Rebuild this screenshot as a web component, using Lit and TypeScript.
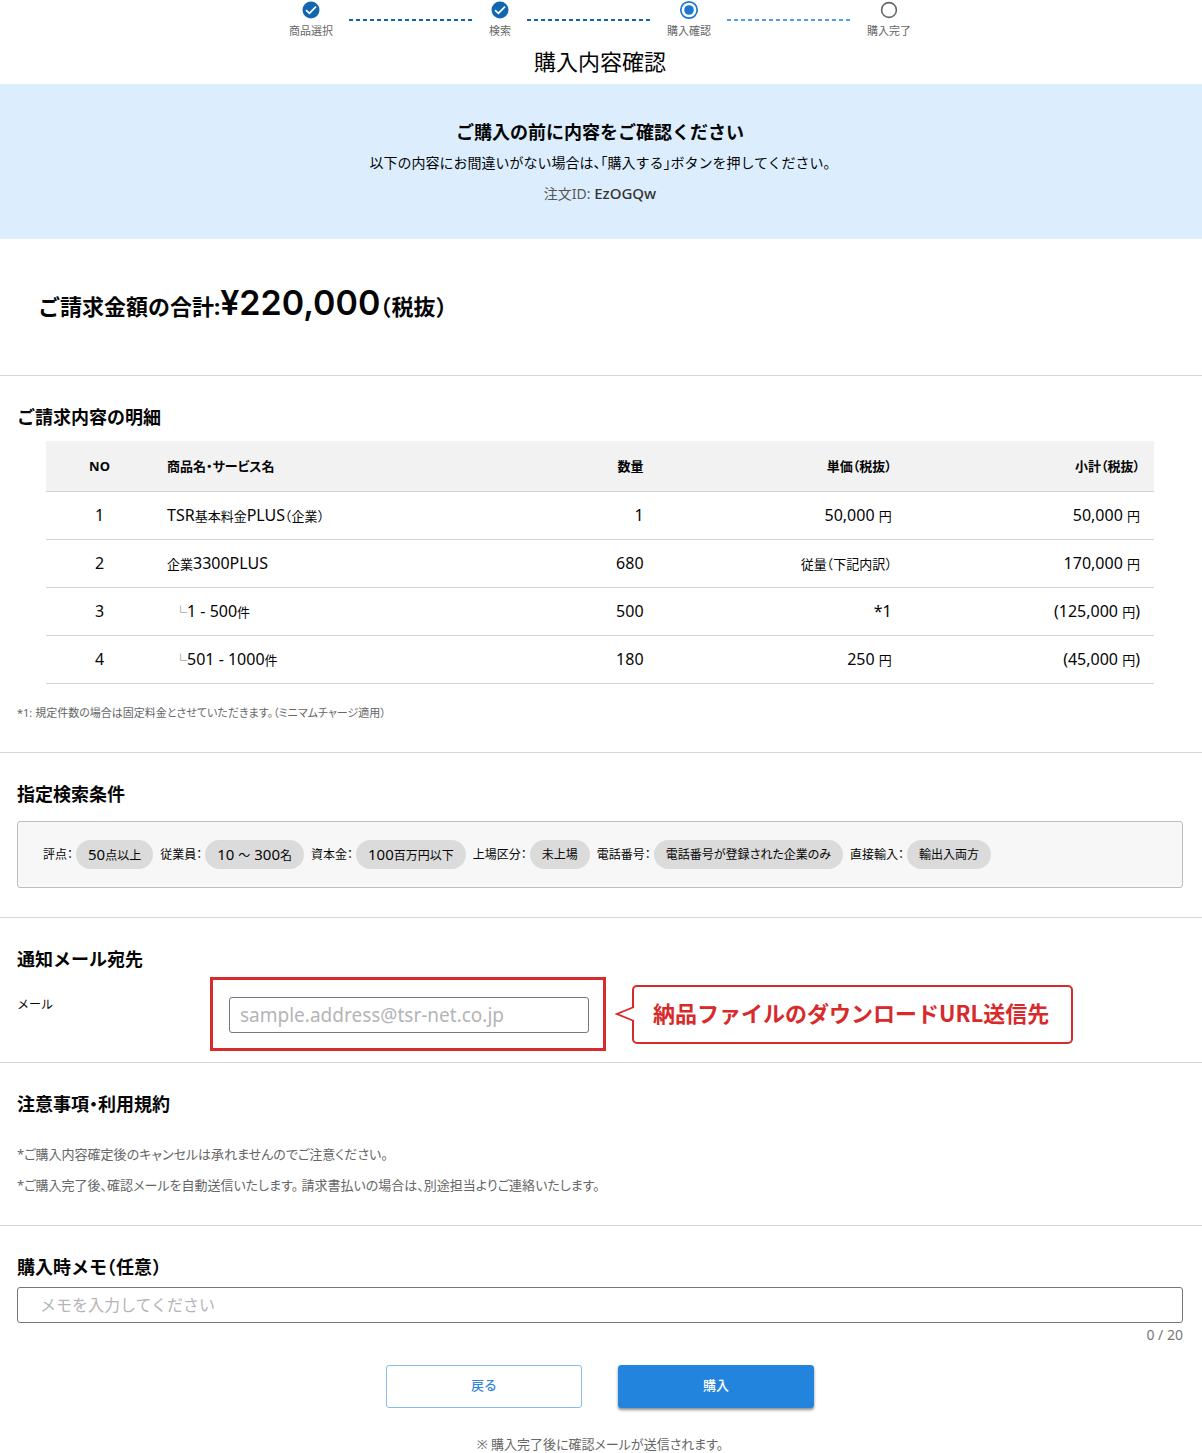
import { LitElement, html, css, svg } from "lit";
import { customElement, state } from "lit/decorators.js";

type StepState = "done" | "current" | "todo";

interface Step {
  label: string;
  state: StepState;
}

interface LineItem {
  no: string;
  name: string;
  child?: boolean;
  quantity: string;
  price: string;
  subtotal: string;
}

const STEPS: Step[] = [
  { label: "商品選択", state: "done" },
  { label: "検索", state: "done" },
  { label: "購入確認", state: "current" },
  { label: "購入完了", state: "todo" },
];

const ITEMS: LineItem[] = [
  { no: "1", name: "TSR基本料金PLUS（企業）", quantity: "1", price: "50,000 円", subtotal: "50,000 円" },
  { no: "2", name: "企業3300PLUS", quantity: "680", price: "従量（下記内訳）", subtotal: "170,000 円" },
  { no: "3", name: "1 - 500件", child: true, quantity: "500", price: "*1", subtotal: "(125,000 円)" },
  { no: "4", name: "501 - 1000件", child: true, quantity: "180", price: "250 円", subtotal: "(45,000 円)" },
];

const CONDITIONS: [string, string][] = [
  ["評点", "50点以上"],
  ["従業員", "10 ～ 300名"],
  ["資本金", "100百万円以下"],
  ["上場区分", "未上場"],
  ["電話番号", "電話番号が登録された企業のみ"],
  ["直接輸入", "輸出入両方"],
];

/** Wraps each run of Latin letters and digits so it can be sized apart from the Japanese text. */
const mixed = (text: string) =>
  text
    .split(/([\x20-\x7e]+)/)
    .filter((part) => part !== "")
    .map((part) => (/^[\x20-\x7e]/.test(part) ? html`<span class="latin">${part}</span>` : part));

@customElement("step-icon")
export class StepIcon extends LitElement {
  static properties = { state: { type: String } };
  declare state: StepState;

  static styles = css`
    :host {
      display: block;
      height: 20px;
    }
    svg {
      display: block;
    }
  `;

  render() {
    const shape =
      this.state === "done"
        ? svg`<circle cx="10" cy="10" r="8.5" fill="#1266b0"/><path d="M5 10.2 8.4 13.4 15 6.6" fill="none" stroke="#fff" stroke-width="1.7"/>`
        : this.state === "current"
          ? svg`<circle cx="10" cy="10" r="8.2" fill="#fff" stroke="#1c78d0" stroke-width="1.7"/><circle cx="10" cy="10" r="4.8" fill="#1c78d0"/>`
          : svg`<circle cx="10" cy="10" r="7.4" fill="#fff" stroke="#666" stroke-width="1.6"/>`;
    return html`<svg width="20" height="20" viewBox="0 0 20 20" aria-hidden="true">${shape}</svg>`;
  }
}

@customElement("app-root")
export class AppRoot extends LitElement {
  @state() private memo = "";

  static styles = css`
    :host {
      display: block;
      background: #fff;
      color: #050505;
      font-family: "Noto Sans", "Noto Sans CJK JP", sans-serif;
      font-size: 13px;
      font-feature-settings: "halt";
    }
    * {
      box-sizing: border-box;
    }
    h1,
    h2,
    p,
    ol {
      margin: 0;
      padding: 0;
    }
    input,
    button {
      font: inherit;
      font-feature-settings: inherit;
    }
    .steps {
      display: flex;
      justify-content: center;
      gap: 15px;
      height: 40px;
      padding-right: 2px;
      list-style: none;
    }
    .step {
      display: flex;
      flex-direction: column;
      align-items: center;
      color: #666;
      font-size: 11px;
      line-height: 22px;
    }
    .connector {
      width: 126px;
      height: 2px;
      margin: 19px -1px 0 1px;
      background: repeating-linear-gradient(90deg, #1266b0 0 4px, transparent 4px 7px);
    }
    .connector.pending {
      background: repeating-linear-gradient(90deg, #559bea 0 4px, transparent 4px 7px);
    }
    .title {
      height: 44px;
      padding-right: 2px;
      text-align: center;
      font-size: 22px;
      font-weight: 400;
      line-height: 42px;
    }
    .banner {
      padding: 32px 2px 30px 0;
      background: #dceefe;
      text-align: center;
      line-height: 30px;
    }
    .banner h2 {
      font-size: 18px;
      font-weight: 700;
      line-height: 32px;
    }
    .banner p {
      font-size: 14px;
    }
    .banner .order {
      color: #555;
    }
    .order strong {
      color: #333;
      font-size: 15px;
      font-weight: 500;
    }
    .total {
      height: 136px;
      padding: 38px;
      font-size: 22px;
      font-weight: 700;
      line-height: 52px;
    }
    .total strong {
      font-family: Inter, "Noto Sans", sans-serif;
      font-size: 34px;
      font-weight: 600;
    }
    .section {
      border-top: 1px solid #d6d6d6;
      padding: 28px 19px 0 17px;
    }
    .heading {
      font-size: 18px;
      font-weight: 700;
      line-height: 26px;
    }
    .bill {
      padding-bottom: 27px;
    }
    .table-wrap {
      padding: 11px 29px 0;
    }
    table {
      width: 100%;
      table-layout: fixed;
      border-collapse: separate;
      border-spacing: 0;
    }
    th,
    td {
      height: 48px;
      padding: 0 14px;
      border-bottom: 1px solid #d2d2d2;
      text-align: right;
      font-weight: 400;
      line-height: 22px;
    }
    th {
      height: 51px;
      background: #f2f2f3;
      font-weight: 700;
      font-feature-settings: "palt";
    }
    .no {
      width: 107px;
      text-align: center;
    }
    .name {
      width: 32%;
      text-align: left;
    }
    .quantity {
      width: 150px;
    }
    td .latin {
      font-size: 16px;
    }
    .branch {
      padding-left: 7px;
      color: #777;
    }
    .footnote {
      margin-top: 17px;
      color: #666;
      font-size: 11px;
      font-feature-settings: "palt";
      line-height: 24px;
    }
    .search {
      padding-bottom: 29px;
    }
    .conditions {
      display: flex;
      flex-wrap: wrap;
      align-items: center;
      gap: 8px 7px;
      margin-top: 14px;
      padding: 18px 25px;
      border: 1px solid #bdbdc0;
      border-radius: 3px;
      background: #f7f7f7;
      font-size: 12px;
      line-height: 29px;
    }
    .condition {
      display: flex;
      gap: 3px;
      margin: 0;
    }
    .chip {
      height: 29px;
      padding: 0 12px;
      border-radius: 15px;
      background: #dbdbdb;
      font-feature-settings: "palt";
    }
    .chip .latin {
      font-size: 15px;
    }
    .mail {
      padding-bottom: 11px;
    }
    .mail-row {
      display: flex;
      align-items: flex-start;
      padding-top: 5px;
    }
    .mail-label {
      width: 193px;
      padding-top: 17px;
      font-size: 12px;
      line-height: 22px;
    }
    .highlight {
      width: 396px;
      padding: 17px 14px 15px 16px;
      border: 3px solid #d82a2a;
    }
    .field {
      display: block;
      width: 100%;
      height: 36px;
      padding: 0 10px;
      border: 1px solid #77777a;
      border-radius: 3px;
      background: #fff;
      color: #111;
      font-size: 19px;
    }
    .field::placeholder {
      color: #b4b4b7;
      opacity: 1;
    }
    .callout {
      position: relative;
      margin: 8px 0 0 26px;
      padding: 0 22px 4px 19px;
      border: 2px solid #d82a2a;
      border-radius: 5px;
      color: #d82a2a;
      font-family: "Noto Sans CJK JP", sans-serif;
      font-size: 22px;
      font-weight: 700;
      line-height: 51px;
      font-feature-settings: normal;
    }
    .pointer {
      position: absolute;
      top: 18px;
      left: -19px;
    }
    .terms {
      padding-bottom: 24px;
    }
    .terms ul {
      margin: 22px 0 0;
      padding: 0;
      list-style: none;
      color: #666;
      font-feature-settings: "palt";
      line-height: 31px;
    }
    .memo .field {
      margin-top: 7px;
      padding: 0 22px;
      font-size: 16px;
    }
    .counter {
      color: #777;
      font-size: 14px;
      line-height: 24px;
      text-align: right;
    }
    .actions {
      display: flex;
      justify-content: center;
      gap: 36px;
      margin-top: 18px;
      padding-right: 2px;
    }
    .button {
      width: 196px;
      height: 43px;
      padding: 0 0 5px;
      border: 1px solid #85bdf0;
      border-radius: 3px;
      background: #fff;
      color: #3385da;
      font-weight: 500;
    }
    .button.primary {
      border-color: #2384dd;
      background: #2384dd;
      color: #fff;
      box-shadow: 0 2px 3px rgba(0, 0, 0, 0.45);
    }
    .memo .actions,
    .memo .closing {
      padding-right: 0;
    }
    .closing {
      margin-top: 28px;
      color: #666;
      font-feature-settings: "palt";
      line-height: 17px;
      text-align: center;
    }
  `;

  render() {
    return html`
      <main>
        <ol class="steps">
          ${STEPS.map(
            (step, i) => html`
              ${i > 0
                ? html`<li class="connector ${STEPS[i - 1].state === "done" ? "" : "pending"}" role="presentation"></li>`
                : ""}
              <li class="step"><step-icon .state=${step.state}></step-icon>${step.label}</li>
            `
          )}
        </ol>
        <h1 class="title">購入内容確認</h1>
        <div class="banner">
          <h2>ご購入の前に内容をご確認ください</h2>
          <p>以下の内容にお間違いがない場合は、「購入する」ボタンを押してください。</p>
          <p class="order">注文ID: <strong>EzOGQw</strong></p>
        </div>
        <p class="total">ご請求金額の合計:<strong>¥220,000</strong>（税抜）</p>

        <section class="section bill">
          <h2 class="heading">ご請求内容の明細</h2>
          <div class="table-wrap">
            <table>
              <thead>
                <tr>
                  <th class="no" scope="col">NO</th>
                  <th class="name" scope="col">商品名・サービス名</th>
                  <th class="quantity" scope="col">数量</th>
                  <th scope="col">単価（税抜）</th>
                  <th scope="col">小計（税抜）</th>
                </tr>
              </thead>
              <tbody>
                ${ITEMS.map(
                  (item) => html`<tr>
                    <td class="no">${mixed(item.no)}</td>
                    <td class="name">${item.child ? html`<span class="branch">└</span>` : ""}${mixed(item.name)}</td>
                    <td class="quantity">${mixed(item.quantity)}</td>
                    <td>${mixed(item.price)}</td>
                    <td>${mixed(item.subtotal)}</td>
                  </tr>`
                )}
              </tbody>
            </table>
          </div>
          <p class="footnote">*1: 規定件数の場合は固定料金とさせていただきます。（ミニマムチャージ適用）</p>
        </section>

        <section class="section search">
          <h2 class="heading">指定検索条件</h2>
          <div class="conditions">
            ${CONDITIONS.map(
              ([label, value]) => html`<div class="condition"><span>${label}：</span><span class="chip">${mixed(value)}</span></div>`
            )}
          </div>
        </section>

        <section class="section mail">
          <h2 class="heading">通知メール宛先</h2>
          <div class="mail-row">
            <label class="mail-label" for="mail">メール</label>
            <div class="highlight">
              <input class="field" id="mail" type="email" placeholder="sample.address@tsr-net.co.jp" />
            </div>
            <div class="callout">
              <svg class="pointer" width="20" height="18" viewBox="0 0 20 18" aria-hidden="true">
                <path d="M20 2V16H17V2Z" fill="#fff" />
                <path d="M19 2 2 9 19 16" fill="#fff" stroke="#d82a2a" stroke-width="1.8" />
              </svg>
              納品ファイルのダウンロードURL送信先
            </div>
          </div>
        </section>

        <section class="section terms">
          <h2 class="heading">注意事項・利用規約</h2>
          <ul>
            <li>*ご購入内容確定後のキャンセルは承れませんのでご注意ください。</li>
            <li>*ご購入完了後、確認メールを自動送信いたします。 請求書払いの場合は、別途担当よりご連絡いたします。</li>
          </ul>
        </section>

        <section class="section memo">
          <h2 class="heading"><label for="memo">購入時メモ（任意）</label></h2>
          <input
            class="field"
            id="memo"
            type="text"
            maxlength="20"
            placeholder="メモを入力してください"
            .value=${this.memo}
            @input=${(e: Event) => (this.memo = (e.target as HTMLInputElement).value)}
          />
          <p class="counter">${this.memo.length} / 20</p>
          <div class="actions">
            <button class="button" type="button">戻る</button>
            <button class="button primary" type="button">購入</button>
          </div>
          <p class="closing">※ 購入完了後に確認メールが送信されます。</p>
        </section>
      </main>
    `;
  }
}
